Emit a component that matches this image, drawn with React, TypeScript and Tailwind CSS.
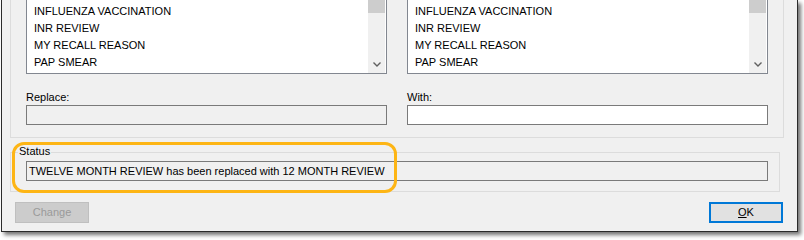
import React from "react";

const items = ["INFLUENZA VACCINATION", "INR REVIEW", "MY RECALL REASON", "PAP SMEAR"];

const ListBox = () => {
  return (
    <div className="flex h-[74px] w-[361px] border-x border-b border-[#828790] bg-white">
      <div className="flex-1 pl-[7px] pt-[3px]">
        {items.map((item) => (
          <div key={item} className="h-[17px] leading-[17px] text-black">
            {item}
          </div>
        ))}
      </div>
      <div className="mr-[1px] flex w-[17px] flex-col bg-[#f0f0f0]">
        <div className="h-[13px] bg-[#cdcdcd]"></div>
        <div className="flex-1"></div>
        <div className="flex h-[14px] items-start justify-center pt-[3px]">
          <svg width="8" height="5" viewBox="0 0 8 5">
            <path d="M0.5 0.5 L4 4 L7.5 0.5" fill="none" stroke="#606060" strokeWidth="1.4" />
          </svg>
        </div>
      </div>
    </div>
  );
};

const Field = ({ label, white }: { label: string; white?: boolean }) => {
  return (
    <div className="w-[361px]">
      <div className="mt-[17px] h-[13px] leading-[13px] text-black">{label}</div>
      <div
        className={
          white
            ? "mt-[1px] h-[20px] border border-[#7a7a7a] bg-white"
            : "mt-[1px] h-[20px] border border-[#7a7a7a] bg-[#f0f0f0]"
        }
      ></div>
    </div>
  );
};

export default function App() {
  return (
    <div
      className="relative h-[240px] w-[804px] bg-white text-[11px]"
      style={{ fontFamily: '"Liberation Sans", Arial, sans-serif' }}
    >
      <div className="ml-px flex h-[232px] w-[797px] flex-col border-b border-l border-r border-[#2b2b2b] bg-[#f0f0f0] shadow-[3px_3px_4px_rgba(0,0,0,0.55)]">
        {/* top group */}
        <div className="ml-[8px] flex h-[138px] w-[774px] justify-between border-x border-b border-[#dcdcdc] px-[15px] pb-[12px]">
          <div className="flex flex-col">
            <ListBox />
            <Field label="Replace:" />
          </div>
          <div className="flex flex-col">
            <ListBox />
            <Field label="With:" white />
          </div>
        </div>

        {/* status group */}
        <div className="relative ml-[8px] mt-[14px] h-[40px] w-[770px] border border-[#dcdcdc] pl-[15px] pt-[8px]">
          <span className="absolute left-[7px] top-[-8px] bg-[#f0f0f0] px-px leading-[13px] text-black">
            Status
          </span>
          <div className="flex h-[20px] w-[742px] items-center border border-[#7a7a7a] bg-[#f0f0f0] pl-[2px] text-black">
            TWELVE MONTH REVIEW has been replaced with 12 MONTH REVIEW
          </div>
        </div>

        {/* buttons */}
        <div className="ml-[13px] mr-[14px] mt-[10px] flex justify-between">
          <div className="flex h-[21px] w-[74px] items-center justify-center border border-[#bfbfbf] bg-[#cccccc] text-[#9a9a9a]">
            Change
          </div>
          <div className="flex h-[21px] w-[74px] items-center justify-center border-2 border-[#0078d7] bg-[#e1e1e1] text-black">
            <span>
              <span className="underline">O</span>K
            </span>
          </div>
        </div>
      </div>

      {/* highlight callout */}
      <div className="pointer-events-none absolute left-[12px] top-[142px] h-[51px] w-[385px] rounded-[12px] border-[3px] border-[#fdb515]"></div>
    </div>
  );
}
